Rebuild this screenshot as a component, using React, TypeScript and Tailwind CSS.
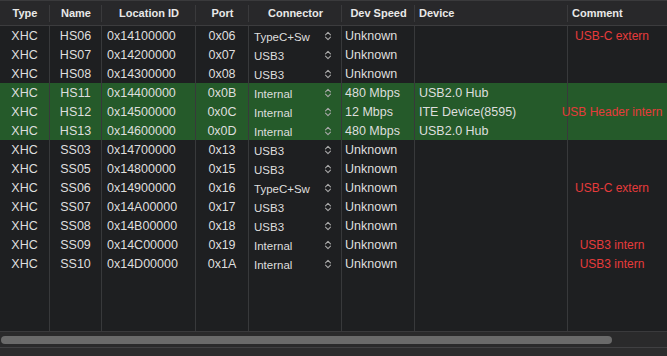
import React from "react";

const COLS = [
  { key: "type", title: "Type", w: "w-[50px]", head: "justify-center", cell: "justify-center" },
  { key: "name", title: "Name", w: "w-[52px]", head: "justify-center", cell: "justify-center" },
  { key: "loc", title: "Location ID", w: "w-[94px]", head: "justify-center", cell: "pl-[5px]" },
  { key: "port", title: "Port", w: "w-[53px]", head: "justify-center", cell: "justify-center" },
  { key: "conn", title: "Connector", w: "w-[93px]", head: "justify-center", cell: "pl-[5px]" },
  { key: "speed", title: "Dev Speed", w: "w-[73px]", head: "justify-center", cell: "pl-[3px]" },
  { key: "dev", title: "Device", w: "w-[153px]", head: "pl-[4px]", cell: "pl-[4px]" },
];

const rows = [
  ["HS06", "0x14100000", "0x06", "TypeC+Sw", "Unknown", "", "USB-C extern"],
  ["HS07", "0x14200000", "0x07", "USB3", "Unknown", "", ""],
  ["HS08", "0x14300000", "0x08", "USB3", "Unknown", "", ""],
  ["HS11", "0x14400000", "0x0B", "Internal", "480 Mbps", "USB2.0 Hub", ""],
  ["HS12", "0x14500000", "0x0C", "Internal", "12 Mbps", "ITE Device(8595)", "USB Header intern"],
  ["HS13", "0x14600000", "0x0D", "Internal", "480 Mbps", "USB2.0 Hub", ""],
  ["SS03", "0x14700000", "0x13", "USB3", "Unknown", "", ""],
  ["SS05", "0x14800000", "0x15", "USB3", "Unknown", "", ""],
  ["SS06", "0x14900000", "0x16", "TypeC+Sw", "Unknown", "", "USB-C extern"],
  ["SS07", "0x14A00000", "0x17", "USB3", "Unknown", "", ""],
  ["SS08", "0x14B00000", "0x18", "USB3", "Unknown", "", ""],
  ["SS09", "0x14C00000", "0x19", "Internal", "Unknown", "", "USB3 intern"],
  ["SS10", "0x14D00000", "0x1A", "Internal", "Unknown", "", "USB3 intern"],
];

const Chevrons = () => (
  <svg width="8" height="10" viewBox="0 0 8 10" fill="none" stroke="#a8a8a8" strokeWidth="1.1" strokeLinecap="round" strokeLinejoin="round">
    <path d="M1.5 3.8 L4 1.3 L6.5 3.8" />
    <path d="M1.5 6.2 L4 8.7 L6.5 6.2" />
  </svg>
);

const Row = ({ r, green }: { r: string[]; green: boolean }) => {
  const values = ["XHC", ...r.slice(0, 6)];
  return (
    <div className={`flex h-[19px] ${green ? "bg-[#255a2a]" : ""}`}>
      {COLS.map((c, i) => (
        <div
          key={c.key}
          className={`${c.w} shrink-0 h-full flex items-center border-r border-[#38393b] ${c.cell} ${
            c.key === "conn" ? "justify-between pr-[9px]" : ""
          }`}
        >
          {c.key === "conn" ? (
            <>
              <span className="text-[11.5px] pt-[4px]">{values[i]}</span>
              <span className="pt-[1px]">
                <Chevrons />
              </span>
            </>
          ) : (
            <span className="whitespace-nowrap pt-[1px]">{values[i]}</span>
          )}
        </div>
      ))}
      <div className="flex-1 h-full flex items-center">
        <div className="w-[88px] flex justify-center whitespace-nowrap text-[12px] text-[#e63b3b] pt-[1px]">
          {r[6]}
        </div>
      </div>
    </div>
  );
};

export default function App() {
  return (
    <div
      className="w-[667px] h-[356px] overflow-hidden bg-[#1e1f21] text-[#dedede] text-[12.5px] flex flex-col"
      style={{ fontFamily: '"Liberation Sans", Arial, sans-serif' }}
    >
      <div className="h-[26px] shrink-0 flex bg-[#28282a] border-t border-[#3a3a3c] border-b border-b-[#3c3c3e] font-bold text-[11px] text-[#e8e8e8]">
        {COLS.map((c) => (
          <div
            key={c.key}
            className={`${c.w} shrink-0 relative flex items-center pt-[1px] ${c.head} after:absolute after:right-0 after:top-[4px] after:h-[17px] after:w-px after:bg-[#3a3a3c]`}
          >
            {c.title}
          </div>
        ))}
        <div className="flex-1 flex items-center pl-[4px] pt-[1px]">Comment</div>
      </div>

      <div className="flex-1 flex flex-col">
        {rows.map((r, i) => (
          <Row key={r[0]} r={r} green={i >= 3 && i <= 5} />
        ))}
        <div className="flex-1 flex">
          {COLS.map((c) => (
            <div key={c.key} className={`${c.w} shrink-0 border-r border-[#38393b]`} />
          ))}
        </div>
      </div>

      <div className="h-[16px] shrink-0 bg-[#2a2a2b] border-t border-[#3a3a3c] flex items-center pl-[1px]">
        <div className="w-[611px] h-[8px] rounded-full bg-[#6a6a6a]" />
      </div>
      <div className="h-[9px] shrink-0 bg-[#2c2c2d] border-t border-[#404042]" />
    </div>
  );
}
